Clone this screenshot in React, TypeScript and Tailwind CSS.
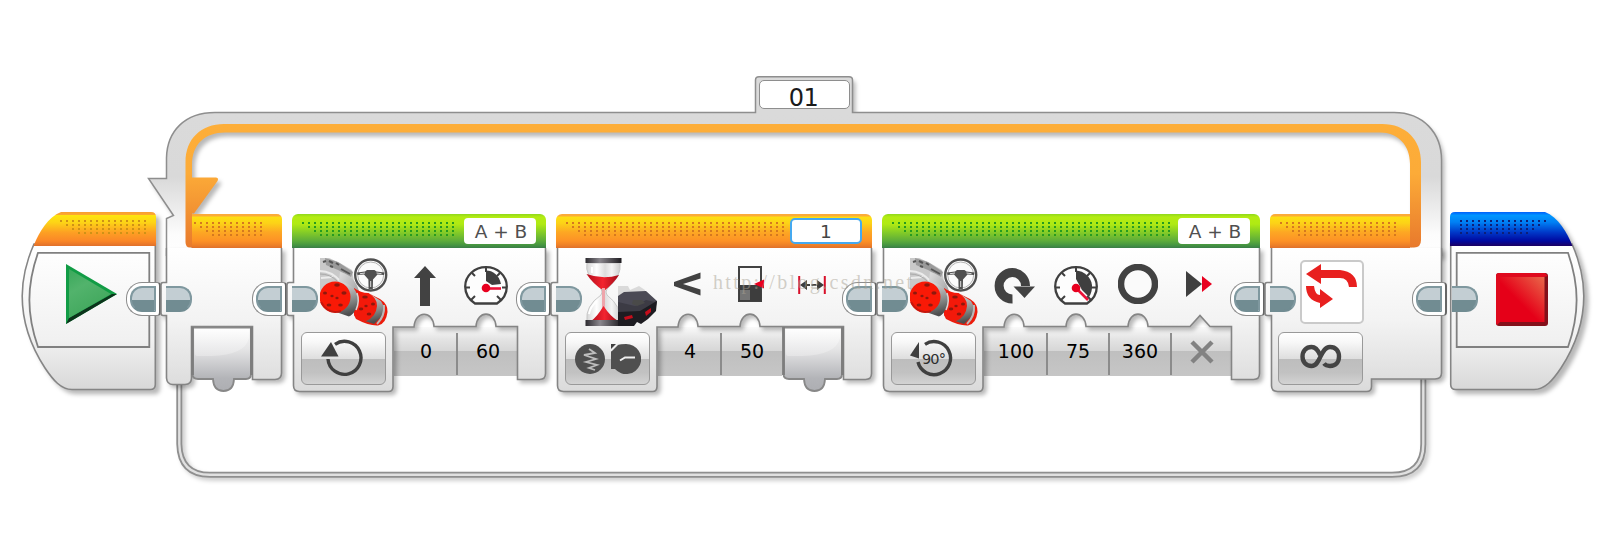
import type { ReactNode } from 'react'

type Tone = 'orange' | 'green'

const headerTone: Record<Tone, string> = {
  orange:
    'bg-[linear-gradient(to_bottom,#fbab3a_0,#fbab3a_2px,#fde012_3px,#fcd317_9px,#fda823_18px,#fd9126_27px,#ee8128_31px,#e0702c_34px)]',
  green:
    'bg-[linear-gradient(to_bottom,#8fd81c_0,#b4ec12_3px,#b0ea13_10px,#86cd26_18px,#5cab3b_27px,#469641_31px,#3a7d48_34px)]',
}

const dotTone: Record<Tone, string> = { orange: '#d5791f', green: '#279b1f' }

/** Four rows of small grip dots; the left edge steps in by one dot per row. */
function Dots({ width, color }: { width: number; color: string }) {
  return (
    <svg className="block shrink-0" width={width} height="14" shapeRendering="crispEdges">
      {[0, 1, 2, 3].map((row) => (
        <line
          key={row}
          x1={row * 6}
          x2={width}
          y1={1 + row * 4}
          y2={1 + row * 4}
          stroke={color}
          strokeWidth="2"
          strokeDasharray="2 4"
        />
      ))}
    </svg>
  )
}

/** Tongue on the left edge of a block. */
function PlugIn({ className = 'left-0 top-[72px]' }: { className?: string }) {
  return (
    <div
      className={`absolute z-20 h-[26px] w-[26px] rounded-r-[12px] border-2 border-l-0 border-[#7f989f] border-b-[#718c92] bg-[linear-gradient(to_bottom,#c3ced3_12px,#718c92_12px)] ${className}`}
    />
  )
}

/** Socket on the right edge of a block. */
function PlugOut({ className = 'top-[68px]' }: { className?: string }) {
  return (
    <div
      className={`absolute -right-[5px] z-20 h-[34px] w-[35px] rounded-l-[16px] rounded-r-[4px] border border-r-2 border-[#8c8c8c] border-r-[#666] bg-white p-[3px] ${className}`}
    >
      <div className="h-[26px] w-[26px] rounded-l-[12px] border-2 border-[#7f989f] border-b-[#718c92] bg-[linear-gradient(to_bottom,#c3ced3_12px,#718c92_12px)]" />
    </div>
  )
}

function Port() {
  return (
    <svg className="relative z-10 block shrink-0 overflow-visible" width="62" height="66">
      <defs>
        <linearGradient id="port" x1="0" y1="0" x2="0" y2="1">
          <stop offset="0" stopColor="#fbfbfb" />
          <stop offset="0.35" stopColor="#e4e4e5" />
          <stop offset="0.8" stopColor="#b3b4b8" />
          <stop offset="1" stopColor="#adaeb2" />
        </linearGradient>
        <linearGradient id="portGloss" x1="0" y1="0" x2="0" y2="1">
          <stop offset="0" stopColor="#fff" />
          <stop offset="1" stopColor="#e6e6e7" />
        </linearGradient>
      </defs>
      <path
        d="M1.500,1.500 H60 V48 Q60,53 55,53 H43 Q42.500,65 32.500,65 Q22.500,65 22,53 H7 Q1.500,53 1.500,48 Z"
        fill="url(#port)"
        stroke="#888"
        strokeWidth="1.800"
      />
      <path d="M4,3 H58 V12 Q54,29 20,30 H6 Q4,30 4,27 Z" fill="url(#portGloss)" opacity=".85" />
      <path d="M1.500,1 V49 M60.500,1 V49" stroke="#7d7d7d" strokeWidth="2.800" />
    </svg>
  )
}

/** Silhouette of a block body, with the mode tray at the lower left and notches for the inputs. */
function Shell({ width, notches, path }: { width: number; notches?: string; path?: string }) {
  const right = width - 0.5
  const d =
    path ??
    `M1.5,34 V68.500 H-3 Q-5,68.500 -5,71 V99 Q-5,101.500 -3,101.500 H1.500 V171.500 Q1.500,177.500 7.500,177.500 H96.500 Q101,177.500 101,172.500 V113 ${notches} V165.500 H${right - 6} Q${right},165.500 ${right},159.500 V34`
  return (
    <svg
      className="absolute left-0 top-0 overflow-visible drop-shadow-[3px_3px_2px_rgba(0,0,0,0.28)]"
      width={width}
      height="180"
    >
      <defs>
        <linearGradient id="body" gradientUnits="userSpaceOnUse" x1="0" y1="34" x2="0" y2="178">
          <stop offset="0" stopColor="#fff" />
          <stop offset="0.5" stopColor="#f3f3f3" />
          <stop offset="1" stopColor="#dadada" />
        </linearGradient>
      </defs>
      <path d={d} fill="url(#body)" stroke="#858585" strokeWidth="1.600" />
    </svg>
  )
}

function ModeButton({ children }: { children: ReactNode }) {
  return (
    <button className="relative z-10 flex h-[53px] w-[85px] shrink-0 items-center justify-center rounded-[6px] border-[1.5px] border-[#999] bg-[linear-gradient(to_bottom,#fff_0,#f8f8f8_9px,#dedede_26px,#bdbdbd_26px,#c2c2c2_40px,#d4d4d4_52px)]">
      {children}
    </button>
  )
}

/** Params side by side, split by thin rules that stop short of the top and bottom. */
function ParamRow({ items }: { items: ReactNode[] }) {
  return (
    <div className="-z-10 flex bg-[linear-gradient(to_bottom,#fafafa_0,#e4e4e4_12px,#d6d6d6_24px,#bfbfbf_24px,#c6c6c6_49px)]">
      {items.map((item, i) => (
        <div key={i} className="flex h-[49px] w-[62px] shrink-0">
          <span className={i > 0 ? 'mt-[6px] h-[42px] w-[2px] bg-[#858585]/90' : 'w-[2px]'} />
          <div className="flex flex-1 justify-center pt-[11px] font-['DejaVu_Sans'] text-[19px] leading-[27px] text-black">
            {item}
          </div>
        </div>
      ))}
    </div>
  )
}

const notch = (x: number) => `H${x - 10} C${x - 9},96 ${x + 9},96 ${x + 10},112.500`

function Block({
  tone,
  widthClass,
  width,
  dots,
  label,
  picture,
  icons,
  mode,
  params,
  notches,
  port,
}: {
  tone: Tone
  widthClass: string
  width: number
  dots: number
  label: ReactNode
  picture: ReactNode
  icons: ReactNode[]
  mode: ReactNode
  params: ReactNode[]
  notches: string
  port?: ReactNode
}) {
  return (
    <section className={`relative isolate h-[178px] shrink-0 ${widthClass}`}>
      <Shell width={width} notches={notches} />
      <header className={`relative flex h-[34px] items-start justify-between rounded-t-[6px] px-[10px] pt-1 ${headerTone[tone]}`}>
        <div className="pt-1">
          <Dots width={dots} color={dotTone[tone]} />
        </div>
        {label}
      </header>
      <div className="relative z-10 flex h-[79px]">
        <div className="w-[101px] shrink-0 pl-[28px] pt-[10px]">{picture}</div>
        {icons.map((icon, i) => (
          <div key={i} className="flex h-[72px] w-[62px] shrink-0 items-center justify-center">
            {icon}
          </div>
        ))}
      </div>
      <div className="flex items-start pl-[9px]">
        <div className="mr-[8px] pt-[5px]">{mode}</div>
        <ParamRow items={params} />
        {port}
      </div>
      <PlugIn />
      <PlugOut />
    </section>
  )
}

function PortLabel() {
  return (
    <div className="h-[26px] w-[72px] rounded-[4px] bg-white pl-[2px] text-center font-['DejaVu_Sans'] text-[18.500px] leading-[27px] text-[#505050]">
      A + B
    </div>
  )
}

/* ---- icons ---- */

function MotorIcon() {
  return (
    <svg width="68" height="68" viewBox="0 0 68 68">
      <defs>
        <linearGradient id="steel" x1="0" y1="0" x2="1" y2="1">
          <stop offset="0" stopColor="#e4e4e4" />
          <stop offset="0.5" stopColor="#b8b8b8" />
          <stop offset="1" stopColor="#777" />
        </linearGradient>
        <linearGradient id="barrel" x1="0" y1="0" x2="0.2" y2="1">
          <stop offset="0" stopColor="#e0e0e0" />
          <stop offset="0.35" stopColor="#b3b3b3" />
          <stop offset="0.65" stopColor="#858887" />
          <stop offset="1" stopColor="#4e4e4e" />
        </linearGradient>
      </defs>
      <path d="M0,0 L9,0 L20,5 L32,12 L35,29 L27,37 L0,37 Z" fill="#c9c9c9" />
      <path d="M5,0 L18,4 L33,14 L31,19 L18,12 L6,7 Z" fill="#9a9a9a" />
      <path d="M3,4 l3,-1 M9,3 l4,2 M16,5 l3,2 M10,8 l3,1 M21,11 l9,5" stroke="#555" strokeWidth="2" />
      <path d="M0,13 Q12,13 21,24 M1,20 L13,19" stroke="#ececec" strokeWidth="2" fill="none" />
      <path d="M0,16 Q10,16 17,23" stroke="#aaa" fill="none" />
      <path d="M20,14 Q35,18 39,33 L40,50 L30,58 L16,53 Z" fill="url(#steel)" />
      {/* rear motor */}
      <path d="M48,35 L60,41 Q68,46 67.500,54 Q66,66 58,67.500 Q49,68 36,61 L34,57 Z" fill="#ec1b0b" />
      <path d="M50,36 L61,43 Q66,50 61,59 L54,66 L42,62 Z" fill="url(#barrel)" />
      <path d="M64,47 Q65,58 57,66" stroke="#b9b9b9" strokeWidth="2" fill="none" />
      <path d="M34,30 Q41,35 48,35 Q57,39 57,48 Q56,59 46,63 Q39,63 34,57 Z" fill="#f3190a" />
      {/* front motor */}
      <path d="M18,24 Q29,24 35,32 Q40,40 37,48 Q34,56 29,58.500 L16,54 Z" fill="url(#barrel)" />
      <path d="M37,35 Q40,43 36,52" stroke="#d6d6d6" strokeWidth="1.500" fill="none" />
      <circle cx="15" cy="39" r="15.500" fill="#f91906" />
      <path d="M1,44 Q8,57 21,53" stroke="#c5170d" strokeWidth="2" fill="none" />
      <g fill="#8d180d">
        <ellipse cx="17" cy="27" rx="2.800" ry="1.700" />
        <ellipse cx="5" cy="35" rx="2" ry="1.600" />
        <ellipse cx="24" cy="35" rx="2.600" ry="1.800" />
        <ellipse cx="9" cy="47" rx="2.400" ry="1.600" />
        <ellipse cx="20.500" cy="47" rx="2.300" ry="1.600" />
        <ellipse cx="12" cy="38" rx="1.600" ry="1.200" />
        <ellipse cx="17" cy="40" rx="1.600" ry="1.200" />
        <ellipse cx="45" cy="39" rx="2.800" ry="1.500" />
        <ellipse cx="41" cy="51" rx="2.300" ry="1.400" />
        <ellipse cx="53" cy="46" rx="2" ry="1.600" />
        <ellipse cx="49" cy="56" rx="2.300" ry="1.500" />
        <ellipse cx="46" cy="48" rx="1.700" ry="1.200" />
      </g>
      <circle cx="50.700" cy="17" r="15.500" fill="#fbfbfb" stroke="#505050" strokeWidth="2.400" />
      <circle cx="50.700" cy="17" r="13" fill="none" stroke="#b5b5b5" strokeWidth="1" />
      <path
        d="M37,14.500 L45,13.500 L47,12 H54.500 L56.500,13.500 L64.500,14.500 L64,17 L57.500,16.500 L53,21.500 L52.800,31 H48.600 L48.400,21.500 L44,16.500 L37.500,17 Z"
        fill="#505050"
      />
      <path d="M40,15.700 L45,15 M56.500,15 L61.500,15.700 M50.700,23 V29" stroke="#ddd" strokeWidth="1" />
    </svg>
  )
}

function UpArrowIcon() {
  return (
    <svg className="ml-[2px] mt-[4px]" width="22" height="40" fill="#424242">
      <path d="M11,0 L22,12 H16 V40 H6 V12 H0 Z" />
    </svg>
  )
}

function GaugeIcon({ fast }: { fast?: boolean }) {
  return (
    <svg className="mt-[3px]" width="44" height="39" viewBox="0 0 44 39">
      <path
        d="M11,37.500 C4,33 1.200,27 1.200,20.500 C1.200,9.500 10.500,1.200 22,1.200 C33.500,1.200 42.800,9.500 42.800,20.500 C42.800,27 40,33 33,37.500 Z"
        fill="#fdfdfd"
        stroke="#3f3f3f"
        strokeWidth="2.300"
      />
      <path
        d="M22,1 V6 M8,7 l3,3 M36,7 l-3,3 M1,21.500 H6 M43,21.500 H38 M7,34 l4,-4 M37,34 l-4,-4"
        stroke="#3f3f3f"
        strokeWidth="2"
      />
      {fast ? (
        <path d="M22,4.500 C30,5 37,11 38,19 C38.500,23 37,28 35,31 L28,24 L22,13 Z" fill="#3f3f3f" />
      ) : (
        <path d="M22,4.500 C29,4.500 35,9 37,18 L28,19 L22,15 Z" fill="#3f3f3f" />
      )}
      {fast ? (
        <path d="M22,22 L34,34" stroke="#ea1238" strokeWidth="2.600" />
      ) : (
        <path d="M22,22.500 H37" stroke="#ea1238" strokeWidth="2.600" />
      )}
      <circle cx="22" cy="22" r="4.300" fill="#e8001f" />
    </svg>
  )
}

function HourglassSensorIcon() {
  return (
    <svg className="ml-px" width="74" height="68" viewBox="0 0 74 68">
      <defs>
        <linearGradient id="cap" x1="0" x2="1" y1="0" y2="0">
          <stop offset="0" stopColor="#2d2b30" />
          <stop offset="0.4" stopColor="#8a878d" />
          <stop offset="1" stopColor="#1e1c20" />
        </linearGradient>
        <linearGradient id="glass" x1="0" x2="1" y1="0" y2="0">
          <stop offset="0" stopColor="#d5d5d5" />
          <stop offset="0.3" stopColor="#fff" />
          <stop offset="0.55" stopColor="#ddd" />
          <stop offset="0.75" stopColor="#f5f5f5" />
          <stop offset="1" stopColor="#ccc" />
        </linearGradient>
        <linearGradient id="sand" x1="0" x2="1" y1="0" y2="0">
          <stop offset="0" stopColor="#b40d1b" />
          <stop offset="0.5" stopColor="#f3242f" />
          <stop offset="1" stopColor="#a20b18" />
        </linearGradient>
      </defs>
      <path d="M2,5 H35 Q37,18 22,31 Q20,34 22,37 Q37,49 35,63 H2 Q0,48 16,37 Q18,34 16,31 Q-1,17 2,5 Z" fill="url(#glass)" stroke="#c8c8c8" />
      <path d="M1.500,16 Q18,22 34,17 Q29,25 19,33 Q8,26 1.500,16 Z" fill="url(#sand)" />
      <path d="M18.500,30 V51" stroke="#eea5ab" strokeWidth="3" />
      <path d="M6,63 Q12,59 18.500,48 Q25,58 33,63 Z" fill="url(#sand)" />
      <path d="M7,9 V15 M4,56 Q5,49 12,43" stroke="#fff" strokeWidth="2" fill="none" />
      <rect x="0.500" y="0" width="36" height="5" fill="url(#cap)" />
      <rect x="0.500" y="62" width="36" height="6" fill="url(#cap)" />
      <path d="M33,28 H43 L45,32 L54,28 L60,32 L60,38 L33,42 Z" fill="#dadada" />
      <path d="M33,38 L39,34 L61,33 L72,43 L71,48 L63,46 L33,57 Z" fill="#4b4a55" />
      <path d="M33,48 L50,52 L72,43 L71,53 L63,61 L56,66 L52,64 L49,68 H33 Z" fill="#1d1c21" />
      <path d="M33,44 L50,48 L61,42 L70,44 L55,53 L33,54 Z" fill="#3c3b44" />
      <path d="M48,42 L57,42 L60,45 L52,48 L47,46 Z" fill="#4a4a49" />
      <path d="M39,59 l8,-2 l1,3 l-8,2 Z M60,54 l6,-4 v4 l-5,4 Z" fill="#c40d1b" />
    </svg>
  )
}

function LessIcon() {
  return (
    <svg className="-ml-[2px]" width="27" height="24">
      <path d="M26.500,0.500 V6.500 L9,12 L26.500,17.500 V23.500 L0,14 V10 Z" fill="#424242" />
    </svg>
  )
}

function ThresholdIcon() {
  return (
    <svg className="ml-[3px]" width="27" height="36">
      <rect x="1" y="1" width="22" height="34" fill="#fafafa" stroke="#424242" strokeWidth="2" />
      <rect x="1" y="19" width="22" height="16" fill="#3d3d3d" />
      <rect x="2" y="24" width="10" height="10" fill="#757575" />
      <path d="M16,18 L26,13.500 V22.500 Z" fill="#e8001f" />
    </svg>
  )
}

function DistanceIcon() {
  return (
    <svg className="mt-[2px]" width="28" height="18">
      <path d="M1.200,0 V18 M26.800,0 V18" stroke="#d8102a" strokeWidth="2" />
      <path d="M2,9 L9,4 V14 Z M26,9 L19,4 V14 Z" fill="#3c3c3c" />
      <path d="M7,9 H21" stroke="#3c3c3c" strokeWidth="2" strokeDasharray="5 1.500" />
    </svg>
  )
}

function TurnIcon() {
  return (
    <svg className="ml-[2px] mt-[4px]" width="42" height="36" viewBox="0 0 42 36">
      <path d="M18.500,31 A13.200,13.200 0 1 1 31.500,18" fill="none" stroke="#424242" strokeWidth="9" />
      <path d="M19.500,18.500 H41 L30.500,30 Z" fill="#424242" />
    </svg>
  )
}

function ForwardIcon() {
  return (
    <svg className="-ml-[2px]" width="26" height="26">
      <path d="M0,0 L16,13 L0,26 Z" fill="#3f3f3f" />
      <path d="M16,5 L26,13 L16,21 Z" fill="#e8001f" />
    </svg>
  )
}

function RingIcon() {
  return (
    <svg width="40" height="40">
      <circle cx="20" cy="20" r="17" fill="#fafafa" stroke="#424242" strokeWidth="6.500" />
    </svg>
  )
}

function RotateIcon({ degrees }: { degrees?: boolean }) {
  return (
    <svg className="-ml-[4px] -mt-[2px]" width="44" height="40">
      {degrees ? (
        <>
          <path d="M15,6.300 A16.500,16.500 0 1 1 8,24" fill="none" stroke="#3f3f3f" strokeWidth="3.400" />
          <path d="M0,17.500 L9,4 V20.500 Z" fill="#3f3f3f" />
          <text x="12" y="26" fontFamily="DejaVu Sans" fontSize="14.500" letterSpacing="-0.900" fill="#2d2d2d">
            90°
          </text>
        </>
      ) : (
        <>
          <path d="M15,6.300 A16.500,16.500 0 1 1 8,21" fill="none" stroke="#3f3f3f" strokeWidth="3.400" />
          <path d="M1,18.500 L11,4 L18.500,18.500 Z" fill="#3f3f3f" />
        </>
      )}
    </svg>
  )
}

function CompareIcon() {
  return (
    <svg width="66" height="32">
      <circle cx="15" cy="16" r="15" fill="#4f4f4f" />
      <path d="M14,6 L20,10 L9,12 L21,16 L11,19 L22,22 L14,25 L20,27" fill="none" stroke="#bdbdbd" strokeWidth="1.800" />
      <path d="M36,8 L42,2 Q46,1 51,1 A15,15 0 1 1 40,26 L36,26 Z" fill="#4f4f4f" />
      <path d="M36,6 V1 H41 Z" fill="#3f3f3f" />
      <path d="M36,8 L43,1" stroke="#eee" strokeWidth="1.500" />
      <path d="M45,17.500 L50,14.500 H60" fill="none" stroke="#efefef" strokeWidth="2" />
    </svg>
  )
}

function InfinityIcon() {
  return (
    <svg className="-mt-[4px]" width="42" height="25" viewBox="0 0 42 25">
      <path
        d="M24,19.500 Q26,22 30,22 C36,22 39,18 39,12.500 C39,7 36,3 30,3 C20,3 21,22 11.500,22 C6,22 2.500,18 2.500,12.500 C2.500,7 6,3 11.500,3 C15.500,3 18,6 20,11"
        fill="none"
        stroke="#444"
        strokeWidth="4.400"
      />
    </svg>
  )
}

function LoopIcon() {
  return (
    <svg width="52" height="46" fill="#e8201f">
      <path d="M0,10 L15,0 V6 H34 Q51,8 51,23 H43 Q42,14 34,14 H15 V20 Z" />
      <path d="M0,22 H8 Q9,31 14,31 V25 L27,35 L14,44 V39 Q0,36 0,22 Z" />
    </svg>
  )
}

/* ---- start and stop ---- */

/** Rounded terminal block; the stop block is the same outline mirrored. */
function Terminal({ stop }: { stop?: boolean }) {
  const id = stop ? 'stop' : 'start'
  return (
    <svg
      className="absolute left-0 top-0 overflow-visible drop-shadow-[4px_4px_2px_rgba(0,0,0,0.28)]"
      width="135"
      height="178"
    >
      <defs>
        <linearGradient id={`${id}Head`} gradientUnits="userSpaceOnUse" x1="0" y1="0" x2="0" y2="34">
          {stop ? (
            <>
              <stop offset="0" stopColor="#0060fa" />
              <stop offset="0.1" stopColor="#0096ff" />
              <stop offset="0.3" stopColor="#0080f4" />
              <stop offset="0.6" stopColor="#0038c8" />
              <stop offset="0.85" stopColor="#0009a0" />
              <stop offset="1" stopColor="#1c0062" />
            </>
          ) : (
            <>
              <stop offset="0" stopColor="#f99e30" />
              <stop offset="0.08" stopColor="#fba930" />
              <stop offset="0.1" stopColor="#fee50e" />
              <stop offset="0.3" stopColor="#fdd516" />
              <stop offset="0.6" stopColor="#fda023" />
              <stop offset="0.85" stopColor="#fb8727" />
              <stop offset="1" stopColor="#e0702c" />
            </>
          )}
        </linearGradient>
        <linearGradient id={`${id}Body`} gradientUnits="userSpaceOnUse" x1="0" y1="34" x2="0" y2="178">
          <stop offset="0" stopColor="#fff" />
          <stop offset="0.65" stopColor="#f1f1f1" />
          <stop offset="1" stopColor="#d8d8d8" />
        </linearGradient>
      </defs>
      <g transform={stop ? 'translate(135 0) scale(-1 1)' : undefined}>
        <path
          d="M134.300,32 V172.500 Q134.300,177.500 129.300,177.500 H51 C40,177.500 32,168 24,156 C9,133 1.200,108 1.200,84 C1.200,64 6,48 13,32 Z"
          fill={`url(#${id}Body)`}
          stroke="#858585"
          strokeWidth="1.600"
        />
        <path d="M40,0 H130 Q135,0 135,5 V34 H12.500 C18,20 27,5 40,0 Z" fill={`url(#${id}Head)`} />
        <path
          d="M17,40.800 H128.300 V135 H17 C5.500,102 5.500,74 17,40.800 Z"
          fill={`url(#${id}Body)`}
          stroke="#808080"
          strokeWidth="1.800"
        />
      </g>
    </svg>
  )
}

function StartBlock() {
  return (
    <section className="relative isolate -mt-0.5 h-[178px] w-[135px] shrink-0">
      <Terminal />
      <div className="relative pl-[39px] pt-[8px]">
        <Dots width={88} color="#cf9216" />
      </div>
      <div className="relative pl-[45px] pt-[30px]">
        <svg width="52" height="61">
          <defs>
            <linearGradient id="play" x1="0" y1="0" x2="0.5" y2="1">
              <stop offset="0" stopColor="#39a85a" />
              <stop offset="0.4" stopColor="#52b36c" />
              <stop offset="1" stopColor="#3fa65b" />
            </linearGradient>
          </defs>
          <path d="M0,0 L51,30 L0,60 Z" fill="#119c45" />
          <path d="M0,60 L51,30 L46,30 L3,54 Z" fill="#0c331b" />
          <path d="M3,5 L45,30 L3,54 Z" fill="url(#play)" />
        </svg>
      </div>
      <PlugOut className="top-[70px]" />
    </section>
  )
}

function StopBlock() {
  return (
    <section className="relative isolate -ml-0.5 -mt-0.5 h-[178px] w-[135px] shrink-0">
      <Terminal stop />
      <div className="relative pl-[10px] pt-[8px]">
        <svg width="90" height="14" className="block" shapeRendering="crispEdges">
          {[88, 82, 76, 68].map((end, row) => (
            <line key={end} x1="0" x2={end} y1={1 + row * 4} y2={1 + row * 4} stroke="#0d1f78" strokeWidth="2" strokeDasharray="2 4" />
          ))}
        </svg>
      </div>
      <div className="relative pl-[46px] pt-[39px]">
        <svg width="52" height="53">
          <defs>
            <linearGradient id="stopFace" x1="0.2" y1="0.8" x2="1" y2="0">
              <stop offset="0.3" stopColor="#e50018" />
              <stop offset="1" stopColor="#e9694a" />
            </linearGradient>
          </defs>
          <rect width="52" height="53" rx="3" fill="#84101a" />
          <path d="M3,0 H49 L52,3 L48,4 V49 L4,49 L1,52 Q0,51 0,50 V3 Q0,0 3,0 Z" fill="#df0a1e" />
          <rect x="4" y="4" width="44.500" height="45" fill="url(#stopFace)" />
        </svg>
      </div>
      <PlugIn className="left-0.5 top-[74px]" />
    </section>
  )
}

/* ---- loop ---- */

/** Grey band with the orange return arrow, plus the thin cable below. */
function LoopFrame() {
  return (
    <svg className="absolute left-0 top-0 h-[542px] w-[1618px]">
      <defs>
        <linearGradient id="band" gradientUnits="userSpaceOnUse" x1="0" y1="112" x2="0" y2="256">
          <stop offset="0" stopColor="#dadada" />
          <stop offset="0.45" stopColor="#d9d9d9" />
          <stop offset="0.85" stopColor="#fcfcfc" />
          <stop offset="1" stopColor="#fff" />
        </linearGradient>
        <linearGradient id="track" gradientUnits="userSpaceOnUse" x1="0" y1="124" x2="0" y2="248">
          <stop offset="0" stopColor="#fdae39" />
          <stop offset="0.4" stopColor="#fcab38" />
          <stop offset="1" stopColor="#e8792c" />
        </linearGradient>
      </defs>
      <g fill="none" className="drop-shadow-[3px_3px_2px_rgba(0,0,0,0.2)]">
        <path d="M179.300,380 V444 Q180,474.800 210,474.800 H1392 Q1423.300,474.800 1423.300,444 V376" stroke="#8f8f8f" strokeWidth="6" />
        <path d="M179.300,380 V444 Q180,474.800 210,474.800 H1392 Q1423.300,474.800 1423.300,444 V376" stroke="#e0e0e0" strokeWidth="2.400" />
      </g>
      <g className="drop-shadow-[3px_4px_2px_rgba(0,0,0,0.28)]">
        <path
          d="M166.500,256 V218.500 L173.500,215.500 L148.500,178.500 H166.500 V158 C167,131 185,112.500 215,112.500 H755.500 V80 Q755.500,76.800 759,76.800 H849 Q852.500,76.800 852.500,80 V112.500 H1394 C1423,112.500 1441.500,133 1441.500,160 V256 H1412 V160 Q1412,132 1380,132 H222 Q191,132 191,163 V256 Z"
          fill="url(#band)"
        />
        <path
          d="M190,247.500 Q185.500,247.500 185.500,242 V162 C185.500,139 201,124 224,124 H1382 C1406,124 1421,140 1421,162 V240 Q1421,247.500 1414,247.500 H1410 V164 C1410,145 1398,132.500 1380,132.500 H225 C205,132.500 192,144 192,165 V177.500 H216 Q219,177.500 217.500,181 L194,213.500 H192 V247.500 Z"
          fill="url(#track)"
        />
      </g>
      <path
        d="M166.500,256 V218.500 L173.500,215.500 L148.500,178.500 H166.500 V158 C167,131 185,112.500 215,112.500 H755.500 V80 Q755.500,76.800 759,76.800 H849 Q852.500,76.800 852.500,80 V112.500 H1394 C1423,112.500 1441.500,133 1441.500,160 V256"
        fill="none"
        stroke="#8e8e8e"
        strokeWidth="1.500"
      />
    </svg>
  )
}

function LoopStart() {
  return (
    <section className="relative isolate h-[178px] w-[116px] shrink-0">
      <Shell
        width={116}
        path="M0.500,34 V68.500 H-3 Q-5,68.500 -5,71 V99 Q-5,101.500 -3,101.500 H0.500 V164 Q1,170.500 7,170.500 H19 Q25.500,170.500 25.500,164 V112.500 H86.500 V165.500 H109 Q115.500,165.500 115.500,159 V34"
      />
      <header className={`relative ml-[26px] h-[34px] rounded-tr-[5px] pl-[2px] pt-[8px] ${headerTone.orange}`}>
        <Dots width={69} color={dotTone.orange} />
      </header>
      <div className="pl-[25px] pt-[78px]">
        <Port />
      </div>
      <PlugIn />
      <PlugOut />
    </section>
  )
}

function LoopEnd() {
  return (
    <section className="relative isolate h-[178px] w-[172px] shrink-0">
      <Shell
        width={172}
        path="M1.500,34 V68.500 H-3 Q-5,68.500 -5,71 V99 Q-5,101.500 -3,101.500 H1.500 V171.500 Q1.500,177.500 7.500,177.500 H96.500 Q101.500,177.500 101.500,172.500 V165 H165 Q171.500,165 171.500,159 V34"
      />
      <header className={`relative mr-[32px] h-[34px] rounded-tl-[5px] pl-[10px] pt-[8px] ${headerTone.orange}`}>
        <Dots width={116} color={dotTone.orange} />
      </header>
      <div className="flex flex-col gap-2 pl-[8px] pt-[12px]">
        <div className="relative z-10 ml-[22px] h-[64px] w-[64px] rounded-[5px] border-2 border-[#cacaca] bg-white pl-[4px] pt-[2px]">
          <LoopIcon />
        </div>
        <ModeButton>
          <InfinityIcon />
        </ModeButton>
      </div>
      <PlugIn />
      <PlugOut />
    </section>
  )
}

export default function App() {
  return (
    <main className="relative flex h-[542px] w-[1618px] flex-col gap-[105px] overflow-hidden bg-white pl-[21px] pt-[80px]">
      <LoopFrame />
      <div className="relative ml-[738px] h-[29px] w-[91px] rounded-[5px] border-[1.5px] border-[#8e8e8e] bg-white pr-[2px] pt-[2px] text-center font-['DejaVu_Sans'] text-[24px] leading-[31px] tracking-[-0.5px] text-[#1a1a1a]">
        01
      </div>
      <div className="relative flex items-start gap-[10px]">
        <StartBlock />
        <LoopStart />

        <Block
          tone="green"
          widthClass="w-[254px]"
          width={254}
          dots={152}
          notches={`${notch(132)} ${notch(194)} H225.500`}
          label={<PortLabel />}
          picture={<MotorIcon />}
          icons={[<UpArrowIcon />, <GaugeIcon />]}
          mode={
            <ModeButton>
              <RotateIcon />
            </ModeButton>
          }
          params={['0', '60']}
        />

        <Block
          tone="orange"
          widthClass="w-[316px]"
          width={316}
          dots={218}
          notches={`${notch(132)} ${notch(194)} H287.500`}
          label={
            <div className="h-[26px] w-[72px] rounded-[5px] border-2 border-[#45a9f0] bg-white text-center font-['DejaVu_Sans'] text-[18.500px] leading-[24px] text-[#444]">
              1
            </div>
          }
          picture={<HourglassSensorIcon />}
          icons={[<LessIcon />, <ThresholdIcon />, <DistanceIcon />]}
          mode={
            <ModeButton>
              <CompareIcon />
            </ModeButton>
          }
          params={['4', '50']}
          port={
            <div className="-mt-px">
              <Port />
            </div>
          }
        />

        <Block
          tone="green"
          widthClass="w-[378px]"
          width={378}
          dots={278}
          notches={`${notch(132)} ${notch(194)} ${notch(256)} H308 L318,101.500 L328,112.500 H349.500`}
          label={<PortLabel />}
          picture={<MotorIcon />}
          icons={[<TurnIcon />, <GaugeIcon fast />, <RingIcon />, <ForwardIcon />]}
          mode={
            <ModeButton>
              <RotateIcon degrees />
            </ModeButton>
          }
          params={[
            '100',
            '75',
            '360',
            <svg width="24" height="24" className="mt-[2px]">
              <path d="M2,2 L22,22 M22,2 L2,22" stroke="#828282" strokeWidth="4.500" />
            </svg>,
          ]}
        />

        <LoopEnd />
        <StopBlock />
      </div>
      <p className="pointer-events-none absolute left-[713px] top-[270px] font-['Liberation_Serif'] text-[20px] leading-[24px] tracking-[2.350px] text-[#a8a294]/50">
        http://blog.csdn.net
      </p>
    </main>
  )
}
